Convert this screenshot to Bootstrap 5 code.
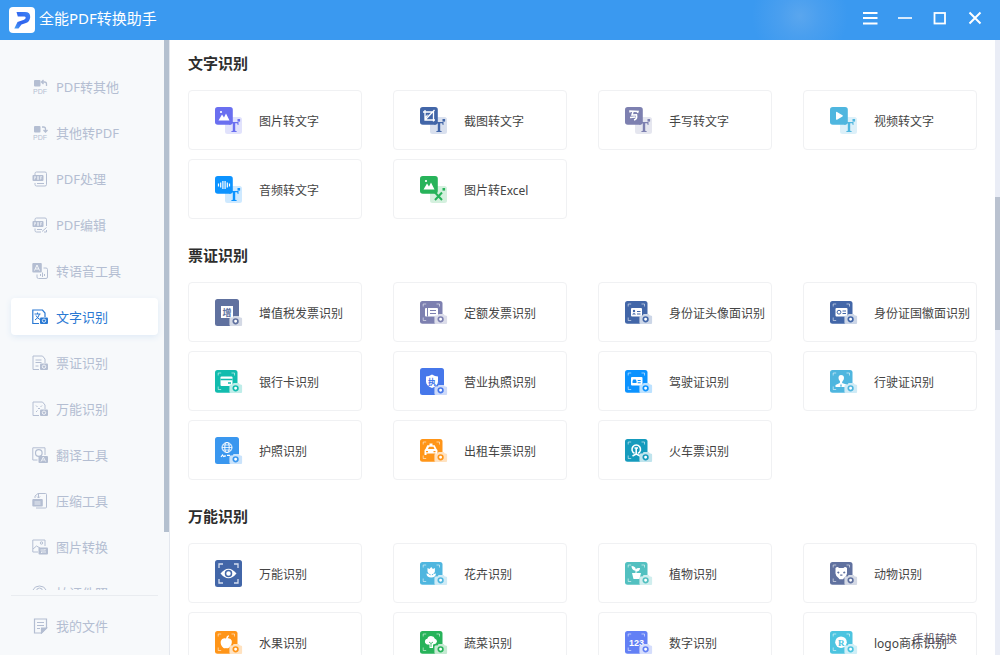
<!DOCTYPE html>
<html lang="zh-CN">
<head>
<meta charset="utf-8">
<meta name="viewport" content="width=device-width, initial-scale=1">
<title>全能PDF转换助手</title>
<link href="https://cdn.jsdelivr.net/npm/bootstrap@5.3.0/dist/css/bootstrap.min.css" rel="stylesheet">
<style>
  body { font-family: "Noto Sans", "Noto Sans CJK SC", sans-serif; font-size: 12px; line-height: 18px; color: #444; }
  .titlebar { height: 40px; padding: 0 17px 0 9px; color: #fff; background: radial-gradient(circle at 80% 40%, #5aa6ee 0, #4a9fef 20px, #3a99f0 48px); }
  .brand-name { font-size: 15px; line-height: 20px; }
  .win-tools { gap: 19px; }
  .win-btn { width: 16px; height: 16px; color: #fff; }
  .body-row { min-height: 0; }
  .sidebar { width: 170px; background: #f7f9fb; border-right: 1px solid #e3e7ee; }
  .side-list { padding: 28px 6px 0 11px; gap: 9px; }
  .side-link { height: 37px; padding-left: 21px; gap: 8px; font-size: 13px; color: #b4bed2; border-radius: 4px; white-space: nowrap; text-decoration: none; flex-shrink: 0; }
  .side-link svg { width: 16px; height: 16px; flex-shrink: 0; }
  .side-link.active { background: #fff; color: #2a79d3; box-shadow: 0 2px 6px #dfeaf6; }
  .side-foot { margin: 5px 6px 0 11px; padding: 11px 0; border-top: 1px solid #e9ecf0; }
  .side-track { width: 5px; }
  .side-thumb { height: 80%; background: #b4c0cf; }
  .main-track { width: 5px; background: #eaedf6; padding-top: 157px; }
  .main-thumb { height: 29%; background: #bac2d0; }
  .content { padding: 11px 18px 0 18px; }
  .section-title { font-size: 15px; line-height: 24px; font-weight: 700; color: #2d2d2d; margin: 0 0 15px; }
  .tools { display: grid; grid-template-columns: repeat(4, minmax(0, 1fr)); gap: 9px 31px; margin-bottom: 24px; }
  .tool { height: 60px; padding: 4px 0 0 26px; gap: 17px; border: 1px solid #f0f1f3; border-radius: 4px; background: #fff; color: #444; white-space: nowrap; }
  .tool svg { width: 27px; height: 27px; margin-bottom: 4px; flex-shrink: 0; overflow: visible; }
  .phone-link { right: 38px; bottom: 7px; font-size: 11px; line-height: 18px; color: #5b5668; text-decoration: none; }
  .serif-mark { font-family: "Liberation Serif", serif; font-weight: 700; }
  .c-violet { color: #6a6ff0; } .c-navy { color: #4266a8; } .c-plum { color: #7d80b0; } .c-sky { color: #4fb6df; }
  .c-azure { color: #0c93ff; } .c-green { color: #27b35a; } .c-slate { color: #60719f; } .c-teal { color: #12bcae; }
  .c-royal { color: #4677ea; } .c-blue { color: #3a97ef; } .c-orange { color: #ff9518; } .c-lake { color: #159bbd; }
  .c-mint { color: #52c0c0; } .c-indigo { color: #6380f5; } .c-cyan { color: #4cc4e0; }
</style>
</head>
<body class="vh-100 d-flex flex-column overflow-hidden bg-white">

<!-- shared icon parts -->
<svg class="d-none" aria-hidden="true">
  <symbol id="pair" viewBox="0 0 27 27">
    <rect x="10" y="10" width="17" height="17" rx="2.5" fill="#fff"/>
    <rect x="10" y="10" width="17" height="17" rx="2.5" fill="currentColor" opacity=".2"/>
    <rect width="17.8" height="17.8" rx="2.8" fill="currentColor"/>
    <rect x="22.5" y="12" width="2.6" height="2.6" fill="currentColor"/>
  </symbol>
  <symbol id="tee" viewBox="0 0 27 27">
    <path d="M14.500 15h9v3h-.8l-.5-1.700h-2v7.400l1.500.5v.8h-5.400v-.8l1.500-.5v-7.400h-2l-.5 1.700h-.8z" fill="currentColor"/>
  </symbol>
  <symbol id="cam" viewBox="0 0 13 10">
    <path d="M1.5 1.6h1.8L4.4 0h5l1.1 1.6h1A1.5 1.5 0 0 1 13 3.100v5.400A1.500 1.500 0 0 1 11.500 10h-10A1.500 1.500 0 0 1 0 8.500V3.100a1.500 1.500 0 0 1 1.500-1.500z" fill="#fff"/>
    <path d="M1.5 1.6h1.8L4.4 0h5l1.1 1.6h1A1.5 1.5 0 0 1 13 3.100v5.400A1.500 1.500 0 0 1 11.500 10h-10A1.500 1.500 0 0 1 0 8.500V3.100a1.500 1.500 0 0 1 1.500-1.500z" fill="currentColor" opacity=".27"/>
    <circle cx="6.300" cy="5.300" r="2.300" fill="#fff" stroke="currentColor" stroke-width="1.700"/>
  </symbol>
  <symbol id="scan" viewBox="0 0 27 27">
    <rect y="2" width="22.500" height="22.800" rx="2.500" fill="currentColor"/>
    <path d="M3.200 7.500v-2.500h3M16.500 5h3v2.500M3.200 18.500v3h3" fill="none" stroke="#fff" stroke-width="1" opacity=".55"/>
  </symbol>
  <symbol id="tall" viewBox="0 0 27 27"><rect width="24" height="27" rx="2.500" fill="currentColor"/></symbol>
</svg>

<header class="titlebar d-flex align-items-center flex-shrink-0">
  <svg width="26" height="26" viewBox="0 0 26 26" aria-hidden="true">
    <defs><linearGradient id="pg" x1="0" y1="1" x2="1" y2="0"><stop offset="0" stop-color="#4aa4f5"/><stop offset=".4" stop-color="#2f62ee"/><stop offset="1" stop-color="#3d86f6"/></linearGradient></defs>
    <rect width="26" height="26" rx="4" fill="#fff"/>
    <path d="M7.500 5H16q5.500 0 5.200 5.200-.4 4.500-4.200 5.800l-4.500 1.500-3 4H5.300l3.200-6.500 6.500-2.300q1.800-.8 1.700-2.200-.2-.9-1.500-.9H8.800z" fill="url(#pg)"/>
  </svg>
  <span class="brand-name ms-1 mb-1">全能PDF转换助手</span>
  <div class="win-tools ms-auto mb-1 d-flex">
    <button class="win-btn btn p-0 border-0 d-flex" aria-label="菜单"><svg width="16" height="16"><path d="M1 3h14.500M1 8h14.500M1 13.500h14.500" stroke="#fff" stroke-width="2"/></svg></button>
    <button class="win-btn btn p-0 border-0 d-flex" aria-label="最小化"><svg width="16" height="16"><path d="M1 8h14" stroke="#fff" stroke-width="1.600"/></svg></button>
    <button class="win-btn btn p-0 border-0 d-flex" aria-label="最大化"><svg width="16" height="16"><rect x="2.500" y="3" width="10.500" height="10.500" fill="none" stroke="#fff" stroke-width="1.800"/></svg></button>
    <button class="win-btn btn p-0 border-0 d-flex" aria-label="关闭"><svg width="16" height="16"><path d="M2.500 2.500l11 11M13.500 2.500l-11 11" stroke="#fff" stroke-width="2"/></svg></button>
  </div>
</header>

<div class="body-row d-flex flex-grow-1">
  <aside class="sidebar d-flex flex-shrink-0">
    <div class="d-flex flex-column flex-grow-1">
      <nav class="side-list d-flex flex-column flex-grow-1 overflow-hidden">
        <a href="#" class="side-link d-flex align-items-center"><svg viewBox="0 0 16 16" fill="currentColor"><rect x="2" y="1" width="6.500" height="6.500" rx="1"/><path d="M10 3h2.500a2 2 0 0 1 2 2v2M11.500 1L9.500 3l2 2" fill="none" stroke="currentColor" stroke-width="1.300"/><text x="1" y="15" font-size="7" font-family="Liberation Sans">PDF</text></svg>PDF转其他</a>
        <a href="#" class="side-link d-flex align-items-center"><svg viewBox="0 0 16 16" fill="currentColor"><rect x="2" y="1" width="6.500" height="6.500" rx="1"/><path d="M10 2h1.500a2 2 0 0 1 2 2v3M11.500 5l2 2 2-2" fill="none" stroke="currentColor" stroke-width="1.300"/><text x="1" y="15" font-size="7" font-family="Liberation Sans">PDF</text></svg>其他转PDF</a>
        <a href="#" class="side-link d-flex align-items-center"><svg viewBox="0 0 16 16" fill="none" stroke="currentColor"><path d="M3 4V2.500Q3 1 4.500 1H13q1.500 0 1.500 1.500v11q0 1.500-1.500 1.500H4.500Q3 15 3 13.500V12"/><rect x=".5" y="4" width="11" height="6" rx="1" fill="currentColor" stroke="none"/><path d="M2.500 8.500v-3h1v1.500h-1M5.500 5.500v3h1v-3zM8.500 8.500v-3h1.500M8.500 7H10" stroke="#f7f9fb" stroke-width=".6"/><path d="M5 12.500h7"/></svg>PDF处理</a>
        <a href="#" class="side-link d-flex align-items-center"><svg viewBox="0 0 16 16" fill="none" stroke="currentColor"><path d="M3 4V2.500Q3 1 4.500 1H13q1.500 0 1.500 1.500V9M3 11.500v2Q3 15 4.500 15H9M10 14.500l4.500-4M12 15h2.500v-2"/><rect x=".5" y="4" width="11" height="6" rx="1" fill="currentColor" stroke="none"/><path d="M2.500 8.500v-3h1v1.500h-1M5.500 5.500v3h1v-3zM8.500 8.500v-3h1.500M8.500 7H10" stroke="#f7f9fb" stroke-width=".6"/><path d="M5 12.500h5"/></svg>PDF编辑</a>
        <a href="#" class="side-link d-flex align-items-center"><svg viewBox="0 0 16 16" fill="none" stroke="currentColor"><rect x=".3" y="0" width="9.500" height="9.500" rx="1" fill="currentColor" stroke="none"/><path d="M2.500 7.500L5 2l2.500 5.500M3.500 6h3" stroke="#f7f9fb"/><path d="M11.500 5h2.500q1.500 0 1.500 1.500v7.500q0 1.500-1.500 1.500H6.500Q5 15.500 5 14v-2.500M8.500 11v2M10.500 9.500v4.500M12.500 11v2"/></svg>转语音工具</a>
        <a href="#" class="side-link active d-flex align-items-center" aria-current="page"><svg viewBox="0 0 16 16" fill="none" stroke="currentColor"><path d="M7 14.500H.8V1h9.700L13 4v4" stroke-width="1.200"/><path d="M2.500 5h6M5.500 3.500V5M7.500 5q-1 4-4.500 6M4 6.500q1.500 3 4 4"/><rect x="8" y="8.500" width="8" height="6.500" rx="1" fill="currentColor" stroke="none"/><circle cx="12" cy="11.700" r="1.700" stroke="#fff" stroke-width=".8"/></svg>文字识别</a>
        <a href="#" class="side-link d-flex align-items-center"><svg viewBox="0 0 16 16" fill="none" stroke="currentColor"><path d="M7 14.500H1V1h9.500L13 4v4M3.500 5h6M3.500 7.500h6M3.500 11h3"/><rect x="8" y="8.500" width="8" height="6.500" rx="1" fill="currentColor" stroke="none"/><circle cx="12" cy="11.700" r="1.700" stroke="#fff" stroke-width=".8"/></svg>票证识别</a>
        <a href="#" class="side-link d-flex align-items-center"><svg viewBox="0 0 16 16" fill="none" stroke="currentColor"><path d="M7 14.500H1V1h9.500L13 4v4M4 4.500l1.500 1.500M10 4.500L8.500 6M4 11l1.500-1.500M6 7.500h2"/><rect x="8" y="8.500" width="8" height="6.500" rx="1" fill="currentColor" stroke="none"/><circle cx="12" cy="11.700" r="1.700" stroke="#fff" stroke-width=".8"/></svg>万能识别</a>
        <a href="#" class="side-link d-flex align-items-center"><svg viewBox="0 0 16 16" fill="none" stroke="currentColor"><path d="M5.500 13H.8V.8H13V8"/><circle cx="6.800" cy="6" r="3.300" stroke-width="1.200"/><rect x="6.500" y="9" width="9.500" height="7" rx="1" fill="currentColor" stroke="none"/><path d="M9 14.500l2.300-4.500 2.300 4.500M10 13h2.600" stroke="#f7f9fb" stroke-width=".8"/></svg>翻译工具</a>
        <a href="#" class="side-link d-flex align-items-center"><svg viewBox="0 0 16 16" fill="none" stroke="currentColor"><path d="M3 5V3l3-2.500h7.500q1 0 1 1v12.500q0 1-1 1H4M6.500 1v4M5 3.500L6.500 5 8 3.500"/><rect x=".3" y="6" width="10.500" height="7.500" rx="1" fill="currentColor" stroke="none"/><path d="M2.500 9h6M2.500 11h6" stroke="#f7f9fb" stroke-width=".8"/></svg>压缩工具</a>
        <a href="#" class="side-link d-flex align-items-center"><svg viewBox="0 0 16 16" fill="none" stroke="currentColor"><path d="M6 13H.8V1H13v6M1 10l3.500-3L8 9"/><circle cx="9.500" cy="4" r="1.200"/><rect x="6.500" y="8.500" width="9.500" height="7" rx="1" fill="currentColor" stroke="none"/><path d="M8.500 11h5l-1-1M14 13H9l1 1" stroke="#f7f9fb" stroke-width=".8"/></svg>图片转换</a>
        <a href="#" class="side-link d-flex align-items-center"><svg viewBox="0 0 16 16" fill="none" stroke="currentColor"><path d="M1 5q1.500-4 6.500-4T14 5v9H1z"/><circle cx="7.500" cy="6" r="3"/></svg>拍证件照</a>
      </nav>
      <div class="side-foot">
        <a href="#" class="side-link d-flex align-items-center"><svg viewBox="0 0 16 16" fill="none" stroke="currentColor" stroke-width="1.200"><path d="M9.500 15H2.500V1h12v9zM5 4.500h7M5 7.500h7M5 10.500h3"/><path d="M9.500 15v-5h5z" fill="currentColor"/></svg>我的文件</a>
      </div>
    </div>
    <div class="side-track"><div class="side-thumb"></div></div>
  </aside>

  <main class="content flex-grow-1 overflow-hidden position-relative">
    <h2 class="section-title">文字识别</h2>
    <div class="tools">
      <button class="tool d-flex align-items-center"><svg class="c-violet" viewBox="0 0 27 27"><use href="#pair"/><use href="#tee"/><path d="M3.500 13.500l3.500-6 2 3 2-4 3.500 7z" fill="#fff"/><circle cx="6" cy="5" r="1.100" fill="#fff"/></svg>图片转文字</button>
      <button class="tool d-flex align-items-center"><svg class="c-navy" viewBox="0 0 27 27"><use href="#pair"/><use href="#tee"/><path d="M3 5h10.500v9.500M5 3v10h10M14.500 3L5 13" fill="none" stroke="#fff" stroke-width="1.300"/><path d="M5 13V9.500L8.500 7z" fill="#fff"/></svg>截图转文字</button>
      <button class="tool d-flex align-items-center"><svg class="c-plum" viewBox="0 0 27 27"><use href="#pair"/><use href="#tee"/><path d="M5 5.500V4l8 .5-.5 1.500M8 4.500L7 8l4.500-.3q1 4.500-2.500 5.300M5 10.500l5.500-.5" fill="none" stroke="#fff" stroke-width="1.500"/></svg>手写转文字</button>
      <button class="tool d-flex align-items-center"><svg class="c-sky" viewBox="0 0 27 27"><use href="#pair"/><use href="#tee"/><path d="M6 5.500q0-1 1-.6l5.500 3.300q.8.600 0 1.200L7 12.700q-1 .4-1-.6z" fill="#fff"/></svg>视频转文字</button>
      <button class="tool d-flex align-items-center"><svg class="c-azure" viewBox="0 0 27 27"><use href="#pair"/><use href="#tee"/><path d="M3.500 7.500v3M5.700 6.500v5M7.900 5v8M10.100 5v8M12.300 6.500v5M14.500 7.500v3" stroke="#fff" stroke-width="1.200"/></svg>音频转文字</button>
      <button class="tool d-flex align-items-center"><svg class="c-green" viewBox="0 0 27 27"><use href="#pair"/><path d="M3.500 13.500l3.500-6 2 3 2-4 3.500 7z" fill="#fff"/><circle cx="6" cy="5" r="1.100" fill="#fff"/><path d="M15 16.500l7 7.500M22 16.500L15 24" stroke="currentColor" stroke-width="2"/></svg>图片转Excel</button>
    </div>

    <h2 class="section-title">票证识别</h2>
    <div class="tools">
      <button class="tool d-flex align-items-center"><svg class="c-slate" viewBox="0 0 27 27"><use href="#tall"/><path d="M6 7h12v12H6z" fill="#fff"/><text x="7.500" y="16.500" font-size="9" font-weight="700" fill="currentColor">增</text><use href="#cam" x="14.300" y="17" width="13" height="10"/></svg>增值税发票识别</button>
      <button class="tool d-flex align-items-center"><svg class="c-plum" viewBox="0 0 27 27"><use href="#scan"/><rect x="5" y="9" width="13" height="8.500" rx="1" fill="#fff"/><path d="M7.500 9v8.500M10 11.500h6M10 14.500h6" stroke="currentColor"/><use href="#cam" x="14.300" y="15" width="13" height="10"/></svg>定额发票识别</button>
      <button class="tool d-flex align-items-center"><svg class="c-navy" viewBox="0 0 27 27"><use href="#scan"/><rect x="6" y="9" width="11" height="8.500" rx="1" fill="#fff"/><circle cx="9" cy="12" r="1.200" fill="currentColor"/><path d="M7 15.500q2-3 4 0zM12 12h3.500v1H12zM12 14.500h3.500v1H12z" fill="currentColor"/><use href="#cam" x="14.300" y="15" width="13" height="10"/></svg>身份证头像面识别</button>
      <button class="tool d-flex align-items-center"><svg class="c-navy" viewBox="0 0 27 27"><use href="#scan"/><rect x="5.500" y="9" width="12" height="8.500" rx="1" fill="#fff"/><circle cx="9" cy="13.200" r="1.900" fill="none" stroke="currentColor"/><path d="M12.500 12h3.500M12.500 14.500h3.500" stroke="currentColor"/><use href="#cam" x="14.300" y="15" width="13" height="10"/></svg>身份证国徽面识别</button>
      <button class="tool d-flex align-items-center"><svg class="c-teal" viewBox="0 0 27 27"><use href="#scan"/><rect x="5.500" y="8.500" width="12" height="9.500" rx="1" fill="#fff"/><path d="M5.500 11.500h12M13 15h3" stroke="currentColor" stroke-width="1.300"/><use href="#cam" x="14.300" y="15" width="13" height="10"/></svg>银行卡识别</button>
      <button class="tool d-flex align-items-center"><svg class="c-royal" viewBox="0 0 27 27"><use href="#tall"/><path d="M12 6.500q3 2 6 2v5q0 4-6 6.500-6-2.500-6-6.500v-5q3 0 6-2z" fill="#fff"/><text x="8" y="16.500" font-size="8" font-weight="700" fill="currentColor">执</text><use href="#cam" x="14.300" y="17" width="13" height="10"/></svg>营业执照识别</button>
      <button class="tool d-flex align-items-center"><svg class="c-azure" viewBox="0 0 27 27"><use href="#scan"/><rect x="6" y="9" width="11.500" height="8.500" rx="1" fill="#fff"/><path d="M7.500 13l.8-1.500h2.400l.8 1.500v2h-4zM12.700 12h3v1h-3zM12.700 14.300h3v1h-3z" fill="currentColor"/><use href="#cam" x="14.300" y="15" width="13" height="10"/></svg>驾驶证识别</button>
      <button class="tool d-flex align-items-center"><svg class="c-sky" viewBox="0 0 27 27"><use href="#scan"/><path d="M11 7q3 0 3 3 0 2-1.500 3.200L12 15l4.500 1.500V19h-11v-2l4.300-2 .2-1.800Q8.500 12 8.500 10q0-3 2.500-3z" fill="#fff"/><path d="M11 15.500l1 3h-2z" fill="currentColor"/><use href="#cam" x="14.300" y="15" width="13" height="10"/></svg>行驶证识别</button>
      <button class="tool d-flex align-items-center"><svg class="c-blue" viewBox="0 0 27 27"><use href="#tall"/><g fill="none" stroke="#fff"><circle cx="12" cy="10.500" r="5"/><ellipse cx="12" cy="10.500" rx="2.200" ry="5"/><path d="M7 10.500h10M8 8h8M8 13h8" stroke-width=".8"/><path d="M6 20l1.500-2 1.500 2M10 18v2M12 18.300h3" stroke-width="1.200"/></g><use href="#cam" x="14.300" y="17" width="13" height="10"/></svg>护照识别</button>
      <button class="tool d-flex align-items-center"><svg class="c-orange" viewBox="0 0 27 27"><use href="#scan"/><path d="M9.500 6.500h3v1.800h2.200l1.800 3.700q1 .5 1 1.500v4.500h-2v-1.500h-9V18h-2v-4.500q0-1 1-1.500l1.800-3.700h2.200z" fill="#fff"/><path d="M8 12l1-2.300h4.500l1 2.300zM6 14h2v1.200H6zM13.500 14h2v1.200h-2z" fill="currentColor"/><use href="#cam" x="14.300" y="15" width="13" height="10"/></svg>出租车票识别</button>
      <button class="tool d-flex align-items-center"><svg class="c-lake" viewBox="0 0 27 27"><use href="#scan"/><path d="M9.500 16.300a4.300 4.300 0 1 1 3.500 0M7.500 19l3.700-2V11M9.500 11h3.500M11.200 17l4 2" fill="none" stroke="#fff" stroke-width="1.600"/><use href="#cam" x="14.300" y="15" width="13" height="10"/></svg>火车票识别</button>
    </div>

    <h2 class="section-title">万能识别</h2>
    <div class="tools">
      <button class="tool d-flex align-items-center"><svg class="c-navy" viewBox="0 0 27 27"><rect width="27" height="27" rx="2.500" fill="currentColor"/><path d="M4 8V4h4M19 4h4v4M4 19v4h4M19 23h4v-4" fill="none" stroke="#d5deef" stroke-width="1.300"/><path d="M5.500 13.500q8-9.500 16 0-8 9.500-16 0z" fill="#fff"/><circle cx="13.500" cy="13.500" r="3" fill="#fff" stroke="currentColor" stroke-width="1.500"/></svg>万能识别</button>
      <button class="tool d-flex align-items-center"><svg class="c-sky" viewBox="0 0 27 27"><use href="#scan"/><path d="M7.500 8l2 1 1.700-2 1.700 2 2-1v3.500q-.5 2.500-3 2.700v1.300q1.500-2 4.100-2-.3 4-4.800 4-4.500 0-4.800-4 2.600 0 4.100 2v-1.300q-2.500-.2-3-2.700z" fill="#fff"/><use href="#cam" x="14.300" y="15" width="13" height="10"/></svg>花卉识别</button>
      <button class="tool d-flex align-items-center"><svg class="c-mint" viewBox="0 0 27 27"><use href="#scan"/><path d="M6.500 6q4 .2 4.300 3.200Q12 7.500 15 8q0 3.200-3.500 3.500V13H16l-1.500 6H8.500L7 13h3.500v-2.300Q6.500 10 6.500 6z" fill="#fff"/><use href="#cam" x="14.300" y="15" width="13" height="10"/></svg>植物识别</button>
      <button class="tool d-flex align-items-center"><svg class="c-slate" viewBox="0 0 27 27"><use href="#scan"/><path d="M5.500 8q2-2 3.500 0h4.500q1.500-2 3.500 0v5.500q-.5 3.500-3 4.500l-1 1.300h-3.500L8.500 18q-2.500-1-3-4.500z" fill="#fff"/><path d="M7 12.500q1.500-2 2.500 0l-1 1.300zM13 12.500q1.500-2 2.500 0l-1.500 1.300zM10.200 14.500h2.200v1.300h-2.200z" fill="currentColor"/><use href="#cam" x="14.300" y="15" width="13" height="10"/></svg>动物识别</button>
      <button class="tool d-flex align-items-center"><svg class="c-orange" viewBox="0 0 27 27"><use href="#scan"/><path d="M11 9.500q.2-2.500 2.500-3.500l.5 1.200q-1 .8-1.200 2 3-.4 4 2.500.5 4.500-3.300 7.300-1.500.5-2.500 0-1 .5-2.500 0-3.500-3-2.700-7 1-3.500 5.200-2.500z" fill="#fff"/><use href="#cam" x="14.300" y="15" width="13" height="10"/></svg>水果识别</button>
      <button class="tool d-flex align-items-center"><svg class="c-green" viewBox="0 0 27 27"><use href="#scan"/><path d="M7 15.500q-2.500-1-2-3.700.5-1.800 2.300-2 .5-2.500 3.700-2.800 3.200.2 3.900 2.700 2.100.5 2.100 2.800-.5 2.500-3 2.800l-1 .2V19H9.500v-3.500z" fill="#fff"/><path d="M9 13l2 1.500 2-1.500M11 14.500V18" fill="none" stroke="currentColor" stroke-width=".8"/><use href="#cam" x="14.300" y="15" width="13" height="10"/></svg>蔬菜识别</button>
      <button class="tool d-flex align-items-center"><svg class="c-indigo" viewBox="0 0 27 27"><use href="#scan"/><text x="4" y="17" font-size="9" font-weight="700" font-family="Liberation Sans" fill="#fff">123</text><use href="#cam" x="14.300" y="15" width="13" height="10"/></svg>数字识别</button>
      <button class="tool d-flex align-items-center"><svg class="c-cyan" viewBox="0 0 27 27"><use href="#scan"/><circle cx="11" cy="13.200" r="5.800" fill="#fff"/><text class="serif-mark" x="8" y="16.500" font-size="9" fill="currentColor">R</text><use href="#cam" x="14.300" y="15" width="13" height="10"/></svg>logo商标识别</button>
    </div>
    <a href="#" class="phone-link position-absolute">手机转换</a>
  </main>
  <div class="main-track flex-shrink-0"><div class="main-thumb"></div></div>
</div>
<script src="https://cdn.jsdelivr.net/npm/bootstrap@5.3.0/dist/js/bootstrap.bundle.min.js"></script>
</body>
</html>
